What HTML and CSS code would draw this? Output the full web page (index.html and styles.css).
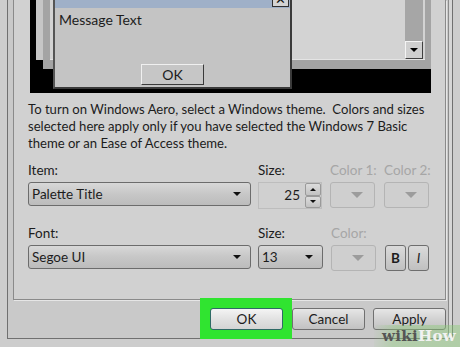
FILE: index.html
```html
<!DOCTYPE html>
<html lang="en">
<head>
  <meta charset="UTF-8" />
  <title>Window Color and Appearance</title>
  <link rel="stylesheet" href="styles.css">
</head>
<body>

<div class="dialog">
  <div class="panel">
    <div class="preview">
      <div class="inactive-win"></div>
      <div class="active-win">
        <div class="client">
          <div class="scrollbar">
            <div class="scroll-btn"><span class="tri-down"></span></div>
          </div>
        </div>
      </div>
      <div class="msg-box">
        <div class="msg-title">
          <span>Message Box</span>
          <div class="msg-close">&#x2715;</div>
        </div>
        <div class="msg-text">Message Text</div>
        <div class="msg-ok">OK</div>
      </div>
    </div>

    <p class="note">To turn on Windows Aero, select a Windows theme.&nbsp; Colors and sizes<br>selected here apply only if you have selected the Windows 7 Basic<br>theme or an Ease of Access theme.</p>

    <div class="field-row">
      <div class="field">
        <label>Item:</label>
        <div class="combo wide"><span>Palette Title</span><i class="tri-down"></i></div>
      </div>
      <div class="field">
        <label>Size:</label>
        <div class="spinner">
          <span>25</span>
          <div class="spin-btns">
            <div class="spin-btn"><i class="tri-up"></i></div>
            <div class="spin-btn"><i class="tri-down small"></i></div>
          </div>
        </div>
      </div>
      <div class="field color1">
        <label class="off">Color 1:</label>
        <div class="combo off"><i class="tri-down"></i></div>
      </div>
      <div class="field color2">
        <label class="off">Color 2:</label>
        <div class="combo off"><i class="tri-down"></i></div>
      </div>
    </div>

    <div class="field-row second">
      <div class="field">
        <label>Font:</label>
        <div class="combo wide"><span>Segoe UI</span><i class="tri-down"></i></div>
      </div>
      <div class="field">
        <label>Size:</label>
        <div class="combo size"><span>13</span><i class="tri-down"></i></div>
      </div>
      <div class="field color1">
        <label class="off">Color:</label>
        <div class="combo off tall"><i class="tri-down"></i></div>
      </div>
      <div class="field styles">
        <label>&nbsp;</label>
        <div class="style-btns">
          <div class="style-btn bold">B</div>
          <div class="style-btn italic">I</div>
        </div>
      </div>
    </div>
  </div>

  <div class="buttons">
    <div class="highlight"><div class="btn ok">OK</div></div>
    <div class="btn">Cancel</div>
    <div class="btn">Apply</div>
  </div>
</div>

<div class="watermark"><span class="wiki">wiki</span><span class="how">How</span></div>

</body>
</html>
```

FILE: styles.css
```css
body {
  margin: 0;
  background: #cdcdcd;
  font-family: Lato, "Noto Sans", sans-serif;
  font-size: 13.5px;
  color: #1c1c1c;
  overflow: hidden;
}

.dialog {
  position: relative;
  margin-left: 7px;
  width: 446px;
  height: 339px;
  box-sizing: border-box;
  border: 1px solid #707070;
  border-top: none;
  box-shadow: inset -3px 0 0 #d6d6d6, inset -4px 0 0 #8a8a8a;
  background: #c9c9c9;
}

.panel {
  margin-left: 5px;
  width: 433px;
  height: 300px;
  box-sizing: border-box;
  border: 1px solid #8a8a8a;
  border-top: none;
  padding: 0 13px 0 14px;
  background: #d1d1d1;
  box-shadow: 1px 1px 0 #e6e6e6;
}

/* preview canvas */
.preview {
  position: relative;
  margin-left: 2px;
  width: 401px;
  height: 93px;
  background: #000;
  overflow: hidden;
}

.inactive-win {
  position: absolute;
  left: 6px;
  top: -20px;
  width: 40px;
  height: 80px;
  background: #c6c6c6;
}

.active-win {
  position: absolute;
  left: 13px;
  right: 0;
  top: -20px;
  height: 89px;
  background: #a4a4a4;
  padding: 0 6px 9px 7px;
  box-sizing: border-box;
}

.client {
  position: relative;
  height: 100%;
  background: #d3d3d3;
  border-bottom: 1px solid #e4e4e4;
  box-sizing: border-box;
}

.scrollbar {
  position: absolute;
  right: 2px;
  top: 0;
  bottom: 0;
  width: 18px;
  background: #a6a6a6;
}

.scroll-btn {
  position: absolute;
  left: 0;
  right: 0;
  bottom: 0;
  height: 18px;
  background: #cfcfcf;
  border: 1px solid;
  border-color: #f4f4f4 #404040 #404040 #f4f4f4;
  box-sizing: border-box;
  display: flex;
  align-items: center;
  justify-content: center;
}

.scroll-btn .tri-down {
  border-top-color: #000;
}

.msg-box {
  position: absolute;
  left: 23px;
  top: -20px;
  width: 239px;
  height: 109px;
  box-sizing: border-box;
  background: #c4c4c4;
  border: 2px solid #3a3a3a;
  border-top: none;
  border-left-color: #555;
}

.msg-title {
  position: relative;
  height: 28px;
  background: #9fb0c8;
  font-size: 14px;
  line-height: 28px;
  padding-left: 2px;
  color: #111;
}

.msg-title span {
  position: relative;
  top: -3px;
}

.msg-close {
  position: absolute;
  right: 1px;
  top: 8px;
  width: 17px;
  height: 19px;
  box-sizing: border-box;
  background: #d4d4d4;
  border: 1px solid #303030;
  font-size: 13px;
  line-height: 20px;
  text-align: center;
}

.msg-text {
  font-size: 14px;
  padding: 0 0 0 4px;
  line-height: 24px;
}

.msg-ok {
  position: absolute;
  left: 86px;
  top: 84px;
  width: 63px;
  height: 21px;
  box-sizing: border-box;
  border: 1px solid;
  border-color: #f0f0f0 #3a3a3a #3a3a3a #f0f0f0;
  background: #c6c6c6;
  text-align: center;
  font-size: 14px;
  line-height: 19px;
}

/* description */
.note {
  margin: 8px 0 0;
  font-size: 13.1px;
  line-height: 17px;
  white-space: nowrap;
}

/* fields */
.field-row {
  display: grid;
  grid-template-columns: 223px 64px 46px 47px;
  column-gap: 7px;
  margin-top: 10px;
  align-items: start;
}

.field-row.second {
  margin-top: 16px;
  grid-template-columns: 223px 65px 46px 46px;
}

.field-row .color1 {
  margin-left: 1px;
}

.field-row .color2 {
  margin-left: 2px;
}

.field-row .styles {
  margin-left: 2px;
}

.field label {
  display: block;
  line-height: 17px;
  margin-bottom: 3px;
  white-space: nowrap;
}

.field label.off {
  color: #a6a6a6;
}

.combo {
  display: flex;
  align-items: center;
  justify-content: space-between;
  height: 24px;
  box-sizing: border-box;
  padding: 0 9px 0 3px;
  border: 1px solid #6c6c6c;
  border-radius: 3px;
  background: linear-gradient(#d8d8d8, #c7c7c7 50%, #bcbcbc);
}

.second .combo.wide,
.second .combo.size {
  margin-top: 1px;
}

.combo.off {
  height: 26px;
  margin-top: 1px;
  border-color: #b4b4b4;
  background: #cfcfcf;
  justify-content: flex-end;
  padding-right: 11px;
}

.combo.off.tall {
  margin-top: 2px;
}

.combo.off .tri-down {
  border-top-color: #9c9c9c;
  border-left-width: 6px;
  border-right-width: 6px;
  border-top-width: 6px;
}

.tri-down {
  display: inline-block;
  width: 0;
  height: 0;
  border-left: 4px solid transparent;
  border-right: 4px solid transparent;
  border-top: 4px solid #111;
}

.tri-down.small {
  border-left-width: 3px;
  border-right-width: 3px;
  border-top-width: 3px;
}

.tri-up {
  display: inline-block;
  width: 0;
  height: 0;
  border-left: 3px solid transparent;
  border-right: 3px solid transparent;
  border-bottom: 3px solid #111;
}

.spinner {
  display: flex;
  height: 27px;
  box-sizing: border-box;
  border: 1px solid #bdbdbd;
  background: #d0d0d0;
}

.spinner span {
  flex: 1;
  text-align: right;
  padding-right: 5px;
  line-height: 25px;
}

.spin-btns {
  display: flex;
  flex-direction: column;
  width: 16px;
}

.spin-btn {
  flex: 1;
  display: flex;
  align-items: center;
  justify-content: center;
  background: linear-gradient(#dcdcdc, #c2c2c2);
  border: 1px solid #9a9a9a;
  border-radius: 2px;
}

.style-btns {
  display: flex;
  gap: 2px;
  margin-top: 2px;
}

.style-btn {
  width: 22px;
  height: 26px;
  box-sizing: border-box;
  border: 1px solid #6e6e6e;
  border-radius: 3px;
  background: linear-gradient(#dadada, #c0c0c0);
  text-align: center;
  line-height: 24px;
}

.style-btn.bold {
  font-weight: bold;
}

.style-btn.italic {
  font-style: italic;
}

/* bottom buttons */
.buttons {
  display: flex;
  justify-content: flex-end;
  align-items: center;
  gap: 8px;
  margin-top: 8px;
  padding-right: 6px;
}

.highlight {
  margin: -10px 0 -9px;
  padding: 10px 9px 9px 10px;
  background: #30e430;
}

.buttons .highlight + .btn {
  margin-left: -8px;
}

.btn {
  width: 73px;
  height: 22px;
  box-sizing: border-box;
  border: 1px solid #707070;
  border-radius: 3px;
  background: linear-gradient(#e6e6e6, #d2d2d2 50%, #c2c2c2);
  text-align: center;
  line-height: 20px;
}

.btn.ok {
  border-color: #2f6a66;
  background: linear-gradient(#f4f4f4, #e2e2e2 50%, #d4d4d4);
}

.watermark {
  position: absolute;
  right: 0;
  bottom: 0;
  width: 86px;
  height: 22px;
  background: linear-gradient(100deg, rgba(140, 200, 120, 0) 0%, rgba(140, 205, 120, 0.4) 25%, rgba(140, 205, 120, 0.45) 100%);
  font-family: "DejaVu Serif", serif;
  font-weight: bold;
  font-size: 15px;
  line-height: 22px;
  text-align: right;
  padding-right: 4px;
  box-sizing: border-box;
  letter-spacing: 0.3px;
}

.watermark .wiki {
  color: #555;
}

.watermark .how {
  color: #f2f2f2;
}
```
